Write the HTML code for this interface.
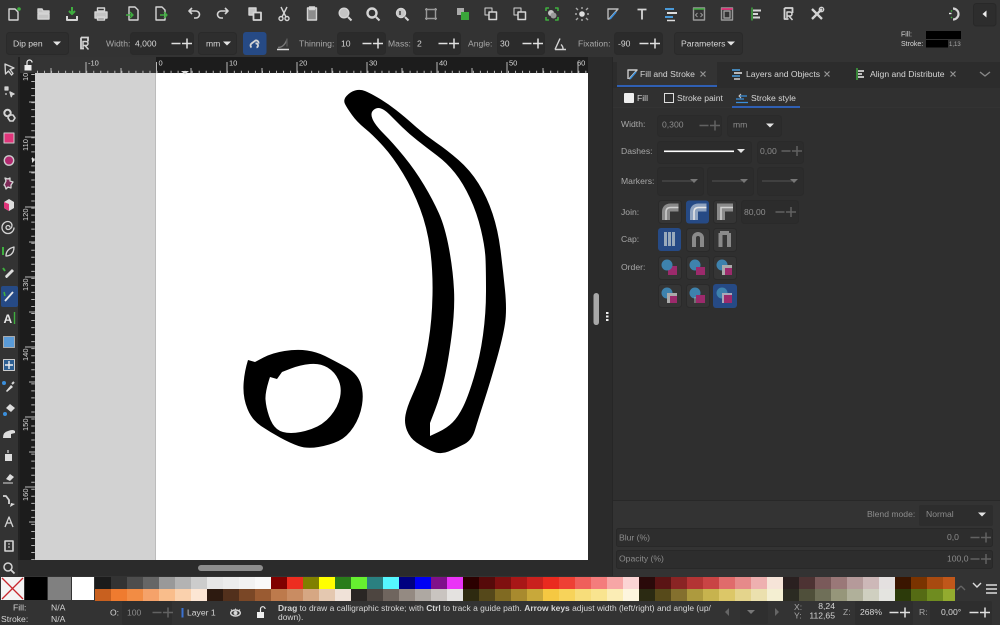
<!DOCTYPE html>
<html><head><meta charset="utf-8"><style>
html,body{margin:0;padding:0;background:#333;width:1000px;height:625px;overflow:hidden}
svg{display:block;position:absolute;left:0;top:0}
text{font-family:"Liberation Sans",sans-serif;font-size:8.6px;fill:#d6d6d6;stroke:none}
.d{fill:#8c8c8c}.m{fill:#a8a8a8}
.pal{position:absolute;display:flex;height:12px}
.pal i{display:block;width:16px;height:11.5px}
.s{fill:none;stroke:#d4d4d4;stroke-width:1.4}
</style></head><body>
<svg width="1000" height="625" viewBox="0 0 1000 625">
<defs>
<path id="mp" d="M-4.500 0h9M6 0h10M11-5v10" stroke="#e0e0e0" stroke-width="1.500" fill="none"/>
<path id="mpd" d="M-4.500 0h9M6 0h10M11-5v10" stroke="#626262" stroke-width="1.500" fill="none"/>
<path id="ar" d="M-4-2h8l-4 4z" fill="#e4e4e4"/>
<path id="ard" d="M-4-2h8l-4 4z" fill="#777"/>
</defs>
<rect width="1000" height="625" fill="#333"/>

<!-- canvas -->
<rect x="18" y="57" width="594" height="519" fill="#2b2b2b"/>
<rect x="35" y="73" width="121" height="487" fill="#d2d2d2"/>
<rect x="155" y="73" width="1" height="487" fill="#bcbcbc"/>
<rect x="156" y="73" width="432" height="487" fill="#fff"/>
<g fill="#000" fill-rule="evenodd">
<path d="M345,104Q343,100 346.500,96Q350,92 355,90.500Q360,89 365,91Q370,93 378.500,98Q387,103 396,110Q405,117 415,126Q425,135 436,142.500Q447,150 458.500,160Q470,170 478.500,183.500Q487,197 492.500,213.500Q498,230 500.500,250Q503,270 505,290Q507,310 505,323.500Q503,337 496.500,360Q490,383 484,401.500Q478,420 475,430Q472,440 464.500,444Q457,448 448.500,451.500Q440,455 431.500,451Q423,447 416.500,442.500Q410,438 407,430.500Q404,423 405.500,415Q407,407 412,396Q417,385 421,374Q425,363 428.500,341.500Q432,320 432.500,295Q433,270 430,248.500Q427,227 420,208.500Q413,190 403,173.500Q393,157 383,146Q373,135 365,128.500Q357,122 352,115Q347,108 345,104Z
M372.500,119Q370,113 373.500,110Q377,107 381,108.500Q385,110 389,114Q393,118 400.500,125.500Q408,133 417.500,140.500Q427,148 437,155.500Q447,163 455,173Q463,183 470,198Q477,213 481,230Q485,247 485.500,258.500Q486,270 486,291.500Q486,313 483,335Q480,357 474,377Q468,397 463,407Q458,417 452.500,422.500Q447,428 438.500,432L430,436L430,423L435,410Q440,397 444,380Q448,363 451.500,336.500Q455,310 454,290Q453,270 449,248.500Q445,227 439,213.500Q433,200 424,185Q415,170 404,156.500Q393,143 384,134Q375,125 372.500,119Z"/>
<path d="M248,360L255,362L263.500,357.500Q272,353 284.500,351Q297,349 307,350.500Q317,352 325,356Q333,360 345,366.500Q357,373 360.500,383Q364,393 362,405Q360,417 353.500,427Q347,437 338.500,441Q330,445 318.500,447Q307,449 298.500,446Q290,443 280,437.500Q270,432 261,426Q252,420 247.500,409Q243,398 243.500,385.500Q244,373 248,360Z
M270,377L277,379L282,372L291,368.500Q300,365 310,364Q320,363 327.500,367.500Q335,372 338.500,380Q342,388 340,397.500Q338,407 330.500,416Q323,425 311.500,429Q300,433 291,433Q282,433 277,429Q272,425 269,416Q266,407 265.500,399.500Q265,392 270,377Z"/>
</g>

<!-- rulers -->
<rect x="35" y="57" width="121" height="16" fill="#343434"/>
<rect x="156" y="57" width="432" height="16" fill="#1c1c1c"/>
<rect x="20" y="73" width="15" height="487" fill="#1c1c1c"/>
<rect x="20" y="57" width="15" height="16" fill="#333"/>
<g stroke="#b8b8b8" fill="none" stroke-width="1">
<path d="M35 72H588" stroke-dasharray="1 6.030" stroke-width="2.400" stroke-dashoffset="-2"/>
<path d="M33 73V560" stroke-dasharray="1 6.030" stroke-width="3.500" stroke-dashoffset="-1"/>
<path d="M86 62v11M156.500 62v11M227 62v11M297 62v11M367 62v11M437 62v11M507 62v11M578 62v11M51 68v5M121 68v5M191 68v5M262 68v5M332 68v5M402 68v5M472 68v5M543 68v5"/>
<path d="M25 137h10M25 207h10M25 277h10M25 347h10M25 417h10M25 487h10M29 102h6M29 172h6M29 242h6M29 312h6M29 382h6M29 452h6M29 522h6"/>
</g>
<path d="M181 71h8l-4 3.500z" fill="#ddd"/>
<path d="M32 157v6l3-3z" fill="#ddd"/>
<g>
<text x="88" y="65.500" style="font-size:7.500px">-10</text><text x="158.500" y="65.500" style="font-size:7.500px">0</text><text x="229" y="65.500" style="font-size:7.500px">10</text><text x="299" y="65.500" style="font-size:7.500px">20</text><text x="369" y="65.500" style="font-size:7.500px">30</text><text x="439" y="65.500" style="font-size:7.500px">40</text><text x="509" y="65.500" style="font-size:7.500px">50</text><text x="577" y="65.500" style="font-size:7.500px">60</text>
<text transform="translate(28 81) rotate(-90)" style="font-size:7.500px">10</text>
<text transform="translate(28 151) rotate(-90)" style="font-size:7.500px">110</text>
<text transform="translate(28 221) rotate(-90)" style="font-size:7.500px">120</text>
<text transform="translate(28 291) rotate(-90)" style="font-size:7.500px">130</text>
<text transform="translate(28 361) rotate(-90)" style="font-size:7.500px">140</text>
<text transform="translate(28 431) rotate(-90)" style="font-size:7.500px">150</text>
<text transform="translate(28 501) rotate(-90)" style="font-size:7.500px">160</text>
</g>
<!-- ruler lock -->
<g transform="translate(28 66)"><rect x="-3.500" y="-1" width="7" height="5.500" fill="#eee"/><path d="M-1-1v-2.500a2.500 2.500 0 0 1 5 0" fill="none" stroke="#eee" stroke-width="1.200"/></g>
<!-- scrollbars -->
<rect x="198" y="565" width="65" height="6" rx="3" fill="#8d8d8d"/>
<rect x="593.500" y="293" width="5.500" height="32" rx="2.700" fill="#a8a8a8"/>
<g fill="#eee"><rect x="606" y="312" width="2.500" height="2"/><rect x="606" y="315.500" width="2.500" height="2"/><rect x="606" y="319" width="2.500" height="2"/></g>
<rect x="612" y="57" width="1" height="519" fill="#262626"/>

<!-- top toolbar icons -->
<g class="s" stroke-linejoin="round">
<g transform="translate(14 14)"><path d="M-5-5h6l3 3v8h-9z"/><circle cx="5" cy="-5" r="1.800" fill="#3fae3f" stroke="none"/></g>
<g transform="translate(44 14)"><path d="M-6-5h4l1 2h6v2h-11zM-6 0h11v5h-11z" fill="#c4c4c4"/></g>
<g transform="translate(72 14)"><path d="M-5 2v4h10v-4" stroke-width="2"/><path d="M0-7v7M-3-3l3 3 3-3" stroke="#3fae3f" stroke-width="2"/></g>
<g transform="translate(101 14)"><rect x="-6" y="-2" width="12" height="6" fill="#c4c4c4"/><rect x="-3.500" y="-6" width="7" height="3"/><rect x="-3.500" y="3" width="7" height="3"/></g>
<g transform="translate(133 14)"><path d="M-4-7h6l3 3v10h-9z"/><path d="M-7 1h7M-3-2l3 3-3 3" stroke="#3fae3f"/></g>
<g transform="translate(161 14)"><path d="M-5-7h6l3 3v10h-9z"/><path d="M-1 1h7M3-2l3 3-3 3" stroke="#3fae3f"/></g>
<g transform="translate(194 14)"><path d="M-4-3h6a3 3 0 0 1 0 7h-2M-2-6l-3 3 3 3" stroke-width="1.600"/></g>
<g transform="translate(223 14)"><path d="M4-3h-6a3 3 0 0 0 0 7h2M2-6l3 3-3 3" stroke-width="1.600"/></g>
<g transform="translate(255 14)"><rect x="-6" y="-6" width="7" height="7" fill="#c4c4c4"/><rect x="-1.500" y="-1.500" width="7.500" height="7.500" fill="#333" stroke-width="1.800"/></g>
<g transform="translate(284 14)"><circle cx="-3" cy="4.500" r="2"/><circle cx="3" cy="4.500" r="2"/><path d="M-2 3l5-10M2 3l-5-10"/></g>
<g transform="translate(312 14)"><rect x="-4.500" y="-6" width="9" height="12" fill="#8d8d8d"/><rect x="-2.500" y="-7" width="5" height="2.500" fill="#ddd"/></g>
<g transform="translate(345 14)"><circle r="4.800" cx="-1" cy="-1" fill="#c4c4c4"/><path d="M3 3l3.500 3.500" stroke-width="2"/></g>
<g transform="translate(373 14)"><circle r="4.500" cx="-1" cy="-1" stroke-width="2.400"/><path d="M3 3l3.500 3.500" stroke-width="2"/></g>
<g transform="translate(402 14)"><circle r="4.500" cx="-1" cy="-1" fill="#c4c4c4"/><path d="M-2-3v4" stroke="#333"/><path d="M3 3l3.500 3.500" stroke-width="2"/></g>
<g transform="translate(431 14)" stroke="#999"><rect x="-4.500" y="-4.500" width="9" height="9"/><path d="M-6-4.500h1.500M-4.500-6v1.500M6-4.500h-1.500M4.500-6v1.500M-6 4.500h1.500M-4.500 6v-1.500M6 4.500h-1.500M4.500 6v-1.500"/></g>
<g transform="translate(463 14)" stroke="none"><rect x="-6" y="-6" width="7" height="7" fill="#aaa" stroke="none"/><rect x="-2" y="-2" width="8" height="8" fill="#3aa53a" stroke="none"/></g>
<g transform="translate(491 14)"><rect x="-6" y="-6" width="7" height="7" stroke-width="1"/><rect x="-2" y="-2" width="7.500" height="7.500" fill="#333" stroke-width="1.500"/></g>
<g transform="translate(520 14)"><rect x="-6" y="-6" width="7" height="7" stroke-width="1"/><rect x="-2" y="-2" width="7.500" height="7.500" fill="#333" stroke-width="1.500"/></g>
<g transform="translate(552 14)"><path d="M-6-3v-3h3M6-3v-3h-3M-6 3v3h3M6 3v3h-3" stroke="#3fae3f" stroke-width="1.600"/><circle cx="-1" cy="-1" r="3" fill="#c4c4c4" stroke="none"/><circle cx="1.500" cy="1.500" r="3" fill="#999" stroke="none"/></g>
<g transform="translate(582 14)" stroke="#aaa"><circle r="2.800" fill="#ddd" stroke="none"/><path d="M-6-6l2 2M6-6l-2 2M-6 6l2-2M6 6l-2-2M-7 0h2M7 0h-2M0-7v2M0 7v-2"/></g>
<g transform="translate(613 14)"><path d="M-5 5v-10h10l-9 10z" stroke="#bbb"/><path d="M-3 5l6-7" stroke="#3b8fdc" stroke-width="1.600"/></g>
<g transform="translate(642 14)"><path d="M-4.500-4.500h9M0-4.500v10" stroke-width="1.800"/></g>
<g transform="translate(671 14)"><path d="M-6-5h9" stroke="#4a9ad8" stroke-width="2"/><path d="M-4-1h10" stroke="#ddd" stroke-width="2"/><path d="M-6 3h8" stroke="#4a9ad8" stroke-width="2"/><path d="M-4 6.500h8" stroke="#ddd" stroke-width="1.500"/></g>
<g transform="translate(699 14)" stroke="#999"><rect x="-5.500" y="-6" width="11" height="12"/><path d="M-5.500-5h11" stroke="#3fae3f" stroke-width="1.500"/><path d="M-1.500-1l-2 2 2 2M1.500-1l2 2-2 2" stroke-width="1"/></g>
<g transform="translate(727 14)" stroke="#999"><rect x="-5.500" y="-6" width="11" height="12"/><path d="M-5.500-5h11" stroke="#e0357a" stroke-width="1.800"/><rect x="-3" y="-3" width="6" height="7"/></g>
<g transform="translate(757 14)"><path d="M-5-6.500v13" stroke="#3fae3f"/><path d="M-4-3.500h8M-4 0h5M-4 3.500h7" stroke-width="2"/></g>
<g transform="translate(789 14)"><path d="M-4.500-6h8v5M-4.500-6v11h4" stroke-width="1.800"/><path d="M-2 4v-6h3a2 2 0 0 1 0 4h-3M0 2l3.500 4" stroke-width="1.500"/></g>
<g transform="translate(817 14)"><path d="M-5-5l10 10M5-5l-10 10" stroke-width="2.300"/><circle cx="4.500" cy="-4.500" r="2.200" stroke-width="1.300"/></g>
<g transform="translate(955 14)"><path d="M-2-5.500a5.500 5.500 0 1 1 0 11" stroke-width="2.200"/><path d="M-4-3.500l1 1M-4 4l1-1" stroke="#3fae3f" stroke-width="1.400"/><path d="M-6-.500h2.500" stroke="#eee"/></g>
</g>
<rect x="973.500" y="3.500" width="22.500" height="22.500" rx="3" fill="#2d2d2d" stroke="#282828"/>
<path d="M986.500 10.500v7l-4-3.500z" fill="#eee"/>

<!-- second toolbar -->
<g fill="#2e2e2e" stroke="#2a2a2a">
<rect x="6.500" y="32.500" width="62" height="22" rx="3"/>
<rect x="130.500" y="32.500" width="63" height="22" rx="3" fill="#2b2b2b"/>
<rect x="198.500" y="32.500" width="38" height="22" rx="3"/>
<rect x="337.500" y="32.500" width="48" height="22" rx="3" fill="#2b2b2b"/>
<rect x="413.500" y="32.500" width="47" height="22" rx="3" fill="#2b2b2b"/>
<rect x="497.500" y="32.500" width="47" height="22" rx="3" fill="#2b2b2b"/>
<rect x="614.500" y="32.500" width="48" height="22" rx="3" fill="#2b2b2b"/>
<rect x="674.500" y="32.500" width="68" height="22" rx="3"/>
</g>
<rect x="243" y="32" width="23.500" height="23" rx="3" fill="#264a85"/>
<text x="13" y="46.500">Dip pen</text><use href="#ar" x="57" y="43.500"/>
<text x="106" y="46.500" class="m">Width:</text><text x="135" y="46.500">4,000</text><use href="#mp" x="176" y="43.500"/>
<text x="206" y="46.500">mm</text><use href="#ar" x="227" y="43.500"/>
<text x="299" y="46.500" class="m">Thinning:</text><text x="341" y="46.500">10</text><use href="#mp" x="367" y="43.500"/>
<text x="388" y="46.500" class="m">Mass:</text><text x="417" y="46.500">2</text><use href="#mp" x="443" y="43.500"/>
<text x="468" y="46.500" class="m">Angle:</text><text x="500" y="46.500">30</text><use href="#mp" x="527" y="43.500"/>
<text x="578" y="46.500" class="m">Fixation:</text><text x="618" y="46.500">-90</text><use href="#mp" x="644" y="43.500"/>
<text x="681" y="46.500">Parameters</text><use href="#ar" x="731" y="43.500"/>
<g class="s">
<g transform="translate(85 43.500)"><path d="M-4-6h7v4M-4-6v11h3" stroke-width="1.800"/><path d="M-2 4v-6h3a2 2 0 0 1 0 4h-3M0 2l3.500 4" stroke-width="1.500"/></g>
<g transform="translate(254.500 43.500)"><path d="M-3 4a2.500 2.500 0 0 1 0-4l4-3a2.500 2.500 0 0 1 3 3" stroke-width="1.800"/><path d="M1 0a2 2 0 0 1 1 4" stroke-width="1.800"/></g>
<g transform="translate(283 43.500)"><path d="M-6 6h12" stroke="#ddd" stroke-width="1.500"/><path d="M-5 4q6 0 9-8" stroke="#777"/><path d="M4-5v8" stroke="#555"/></g>
<g transform="translate(560 43.500)"><path d="M-5 6l5-11M-5 6h11M1 1a6 6 0 0 1 2 5"/></g>
</g>
<!-- fill stroke indicator -->
<text x="901" y="36.500" style="font-size:7px">Fill:</text><text x="901" y="46" style="font-size:7px">Stroke:</text>
<rect x="926" y="31" width="35" height="8" fill="#000"/><rect x="926" y="40" width="22" height="7.500" fill="#000"/>
<text x="949" y="46" style="font-size:6px" class="m">1,13</text>

<!-- left toolbar -->
<rect x="18" y="57" width="2" height="503" fill="#222"/>
<rect x="1" y="286" width="17" height="21" rx="2" fill="#264a85"/>
<g class="s" stroke-linejoin="round">
<g transform="translate(9 69)"><path d="M-4-5l9 4-4 1.500 3 4-1.500 1.500-3-4-3 3z" stroke-width="1.300"/></g>
<g transform="translate(9 91)"><path d="M-4-4h3v3h-3zM-3 2v2" stroke-width="1.200" fill="#ccc"/><path d="M1 1l4 2-2 .7-.7 2z" fill="#ddd"/></g>
<g transform="translate(9 115)"><circle cx="-1.500" cy="-2" r="3.200" stroke-width="2"/><path d="M0 0h4l2 3-2 3h-3l-2-3z" stroke-width="1.600"/></g>
<g transform="translate(9 138)"><rect x="-5" y="-5" width="10" height="10" fill="#e0357a" stroke="#ccc" stroke-width="1"/></g>
<g transform="translate(9 160.500)"><circle r="4.700" fill="#b32a70" stroke="#ccc" stroke-width="1.400"/></g>
<g transform="translate(9 183)"><path d="M-5 2l2-4-1-3 3 1 2-1 0 3 3 1-2 3 0 3-3-1-2 2-1-3z" fill="#7e2a58" stroke-width="1.300"/></g>
<g transform="translate(9 205)"><path d="M0-6l5 3v6l-5 3-5-3v-6z" fill="#ddd" stroke="none"/><path d="M0-1l-5-2v6l5 3z" fill="#e0357a" stroke="none"/></g>
<g transform="translate(9 227.500)"><path d="M1 0a2 2 0 1 0-2 2a4 4 0 1 0 0-8a6 6 0 1 0 6 6" stroke-width="1.300"/></g>
<g transform="translate(9 251)"><path d="M-6-4v8" stroke="#3fae3f" stroke-width="2"/><path d="M-3 5q0-7 8-9q0 8-7 9z" stroke-width="1.300"/></g>
<g transform="translate(9 273)"><path d="M-6-5l2 3" stroke="#3fae3f" stroke-width="2"/><path d="M-3 5l-1-2 7-7 2 2-7 7z" fill="#ddd" stroke="none"/></g>
<g transform="translate(9 296)"><path d="M-5-4l1 4" stroke="#3fae3f" stroke-width="1.600"/><path d="M-4 5l8-9" stroke-width="1.800" stroke="#e8e8e8"/></g>
<g transform="translate(9 318)"><text x="-5.500" y="5" style="font-size:12px;font-weight:bold;fill:#e8e8e8">A</text><path d="M5.500-6v12" stroke="#3fae3f" stroke-width="1.400"/></g>
<g transform="translate(9 342)"><rect x="-5.500" y="-5.500" width="11" height="11" fill="#5a9bd8" stroke="#aaa" stroke-width="1"/></g>
<g transform="translate(9 365)"><rect x="-5.500" y="-5.500" width="11" height="11" fill="#2d5f92" stroke="#ccc" stroke-width="1"/><path d="M-4 0h4v-4M4 0h-4v4" stroke="#eee"/></g>
<g transform="translate(9 387)"><path d="M-3 4l5-6 2 2-6 5z" fill="#ddd" stroke="none"/><path d="M3-3l2-2" stroke-width="2"/><circle cx="-5" cy="-4" r="2" fill="#3b8fdc" stroke="none"/></g>
<g transform="translate(9 409)"><path d="M1-5l5 4-4 4-5-4z" fill="#ddd" stroke="none"/><circle cx="-4" cy="5" r="2" fill="#3b8fdc" stroke="none"/></g>
<g transform="translate(9 433)"><path d="M-6 5q0-6 5-7 5-2 7 0v2l-4 1v4z" fill="#ddd" stroke="none"/></g>
<g transform="translate(9 456)"><rect x="-4" y="-2" width="7" height="7" fill="#ddd" stroke="none"/><path d="M-1-6v3" stroke="#999" stroke-width="2"/></g>
<g transform="translate(9 478)"><path d="M-3 1l4-5 4 3-4 4z" fill="#ddd" stroke="none"/><path d="M-6 5h10" stroke="#aaa" stroke-width="1.400"/></g>
<g transform="translate(9 500)"><path d="M-6-4l3 0 3 4v4" stroke-width="1.800"/><path d="M2 3l-1 4 5-3z" fill="#ddd" stroke="none"/></g>
<g transform="translate(9 522)"><path d="M-4 5l4-10 4 10M-2 1h4" stroke-width="1.300"/></g>
<g transform="translate(9 546)"><rect x="-4" y="-5" width="8" height="10" stroke-width="1.600"/><path d="M-1-2h2M-1 1h2" stroke-width="1"/></g>
<g transform="translate(9 568)"><circle cx="-1" cy="-1" r="4" stroke-width="1.500"/><path d="M2 2l3.500 3.500" stroke-width="1.800"/></g>
</g>

<!-- panel -->
<rect x="613" y="62" width="387" height="45" fill="#303030"/>
<rect x="613" y="62" width="387" height="26" fill="#2c2c2c"/>
<rect x="617" y="62" width="100" height="24" fill="#333"/>
<rect x="617" y="85" width="100" height="2" fill="#2f5fb3"/>
<rect x="732" y="106" width="68" height="2" fill="#2f5fb3"/>
<rect x="613" y="108" width="387" height="392" fill="#2f2f2f"/>
<rect x="613" y="500" width="387" height="1" fill="#282828"/>
<text x="640" y="77">Fill and Stroke</text>
<text x="746" y="77">Layers and Objects</text>
<text x="870" y="77">Align and Distribute</text>
<g class="s" stroke-linejoin="round">
<path d="M700.500 71.500l5 5M705.500 71.500l-5 5M824.500 71.500l5 5M829.500 71.500l-5 5M950.500 71.500l5 5M955.500 71.500l-5 5" stroke="#999" stroke-width="1.200"/>
<path d="M980 72l5 4 5-4" stroke="#888"/>
<g transform="translate(632 74)"><path d="M-4 5v-9h9l-8 9" stroke="#ccc"/><path d="M-2 5l6-7" stroke="#3b8fdc" stroke-width="1.400"/></g>
<g transform="translate(737 74)"><path d="M-5-4h8" stroke="#4a9ad8" stroke-width="1.600"/><path d="M-3-1h8" stroke="#ddd" stroke-width="1.600"/><path d="M-5 2h8" stroke="#4a9ad8" stroke-width="1.600"/><path d="M-3 5h6" stroke="#ddd" stroke-width="1.400"/></g>
<g transform="translate(861 74)"><path d="M-4-6v12" stroke="#3fae3f"/><path d="M-3-3h6M-3 0h4M-3 3h6" stroke-width="1.800"/></g>
<g transform="translate(742 98)"><path d="M-6 1h8M-2-2h7M-6 4.500h12" stroke="#3b8fdc" stroke-width="1.300"/><path d="M-1-4l-2 2 2 2" stroke="#ccc" stroke-width="1"/></g>
</g>
<rect x="624" y="93" width="10" height="10" rx="1" fill="#eee"/>
<rect x="664.500" y="93.500" width="9" height="9" fill="none" stroke="#ddd"/>
<text x="637" y="101">Fill</text><text x="677" y="101">Stroke paint</text><text x="751" y="101">Stroke style</text>

<!-- stroke style form -->
<g fill="#2c2c2c" stroke="#2a2a2a">
<rect x="657.500" y="115.500" width="64" height="21" rx="3"/>
<rect x="727.500" y="115.500" width="54" height="21" rx="3"/>
<rect x="657.500" y="141.500" width="94" height="22" rx="3"/>
<rect x="757.500" y="141.500" width="46" height="22" rx="3"/>
<rect x="657.500" y="167.500" width="46" height="28" rx="3"/>
<rect x="707.500" y="167.500" width="46" height="28" rx="3"/>
<rect x="757.500" y="167.500" width="46" height="28" rx="3"/>
<rect x="741.500" y="200.500" width="57" height="23" rx="3"/>
</g>
<text x="621" y="127" class="m">Width:</text><text x="662" y="127.500" class="d">0,300</text><use href="#mpd" x="704" y="125.500"/>
<text x="733" y="127.500" class="d">mm</text><use href="#ar" x="770" y="125.500"/>
<text x="621" y="154" class="m">Dashes:</text>
<rect x="664" y="150.500" width="70" height="1.600" fill="#fff"/><use href="#ar" x="741" y="151"/>
<text x="760" y="154" class="d">0,00</text><use href="#mpd" x="786" y="151"/>
<text x="621" y="184" class="m">Markers:</text>
<path d="M662 181h30M712 181h30M762 181h30" stroke="#555"/>
<use href="#ard" x="694" y="181"/><use href="#ard" x="744" y="181"/><use href="#ard" x="794" y="181"/>
<text x="621" y="215" class="m">Join:</text><text x="744" y="215" class="d">80,00</text><use href="#mpd" x="780" y="212"/>
<text x="621" y="242" class="m">Cap:</text><text x="621" y="270" class="m">Order:</text>
<g fill="#353535" stroke="#2a2a2a">
<rect x="658.500" y="200.500" width="23" height="23" rx="3"/>
<rect x="686" y="200.500" width="23" height="23" rx="3" fill="#264a85" stroke="none"/>
<rect x="713.500" y="200.500" width="23" height="23" rx="3"/>
<rect x="658" y="228" width="23" height="23" rx="3" fill="#264a85" stroke="none"/>
<rect x="686.500" y="228.500" width="23" height="23" rx="3"/>
<rect x="713.500" y="228.500" width="23" height="23" rx="3"/>
<rect x="658.500" y="256.500" width="23" height="23" rx="3"/>
<rect x="686.500" y="256.500" width="23" height="23" rx="3"/>
<rect x="713.500" y="256.500" width="23" height="23" rx="3"/>
<rect x="658.500" y="284.500" width="23" height="23" rx="3"/>
<rect x="686.500" y="284.500" width="23" height="23" rx="3"/>
<rect x="713" y="284" width="24" height="24" rx="3" fill="#264a85" stroke="none"/>
</g>
<!-- join / cap icons -->
<g fill="none">
<path d="M666 220v-8q0-4.500 4.500-4.500h8" stroke="#8a8a8a" stroke-width="8"/><path d="M666 220v-8q0-4.500 4.500-4.500h8" stroke="#cfcfcf" stroke-width="1.500"/>
<path d="M694 220v-8q0-4.500 4.500-4.500h8" stroke="#8fa3c0" stroke-width="8"/><path d="M694 220v-8q0-4.500 4.500-4.500h8" stroke="#e8e8e8" stroke-width="1.500"/>
<path d="M721 220v-12.500h12" stroke="#8a8a8a" stroke-width="8"/><path d="M721 220v-12.500h12" stroke="#cfcfcf" stroke-width="1.500"/>
<path d="M665.500 246v-14M669.500 246v-14M673.500 246v-14" stroke="#9ab" stroke-width="3"/>
<path d="M694 247v-9a4 4 0 0 1 8 0v9" stroke="#8a8a8a" stroke-width="4"/>
<path d="M720.500 247v-14M729 247v-14M720 233h9" stroke="#8a8a8a" stroke-width="4"/>
</g>
<g>
<g transform="translate(670 268)"><rect x="-2" y="-2" width="9" height="9" fill="#9c2a6c"/><circle cx="-3" cy="-3" r="5.500" fill="#3e82ad"/></g>
<g transform="translate(698 268)"><circle cx="-3" cy="-3" r="5.500" fill="#3e82ad"/><rect x="-2" y="-1" width="9" height="8" fill="#9c2a6c"/></g>
<g transform="translate(725 268)"><circle cx="-3" cy="-3" r="5.500" fill="#3e82ad"/><rect x="-3" y="-3" width="10" height="10" fill="#aaa"/><rect x="0" y="0" width="7" height="7" fill="#9c2a6c"/></g>
<g transform="translate(670 296)"><circle cx="-3" cy="-3" r="5.500" fill="#3e82ad"/><rect x="-3" y="-3" width="10" height="10" fill="#aaa"/><rect x="0" y="0" width="7" height="7" fill="#9c2a6c"/></g>
<g transform="translate(698 296)"><circle cx="-3" cy="-3" r="5.500" fill="#3e82ad"/><rect x="-2" y="-1" width="9" height="8" fill="#9c2a6c"/><path d="M-3 7v-6" stroke="#aaa"/></g>
<g transform="translate(725 296)"><circle cx="-3" cy="-3" r="5.500" fill="#3e82ad"/><rect x="-3" y="-3" width="10" height="10" fill="#a9a9b8"/><rect x="-1" y="-1" width="8" height="8" fill="#9c2a6c"/></g>
</g>

<!-- blend / blur / opacity -->
<rect x="919" y="505" width="74" height="21" rx="2" fill="#2d2d2d"/>
<text x="867" y="517" class="d">Blend mode:</text><text x="926" y="517" class="d">Normal</text><use href="#ar" x="982" y="514.500"/>
<rect x="616.500" y="528.500" width="376" height="18" rx="2" fill="#2d2d2d" stroke="#282828"/>
<rect x="616.500" y="550.500" width="376" height="18" rx="2" fill="#2d2d2d" stroke="#282828"/>
<text x="619" y="540.500" class="d">Blur (%)</text><text x="947" y="540" class="d">0,0</text><use href="#mpd" x="975" y="537.500"/>
<text x="619" y="561.500" class="d">Opacity (%)</text><text x="947" y="561.500" class="d">100,0</text><use href="#mpd" x="975" y="559"/>

<!-- palette -->
<rect x="0" y="576" width="1000" height="25" fill="#333"/>
<rect x="1" y="577" width="23" height="23" fill="#f4f4f4"/>
<path d="M2 578l21 21M23 578l-21 21" stroke="#c8282e" stroke-width="1.300"/>
<rect x="25" y="577" width="22" height="23" fill="#000"/>
<rect x="48" y="577" width="23" height="23" fill="#808080"/>
<rect x="72" y="577" width="22" height="23" fill="#fff"/>
<path d="M961 586l-4 4M961 586l4 4" stroke="#666" stroke-width="1.300"/>
<path d="M973 583l4 4 4-4" stroke="#ddd" stroke-width="1.400" fill="none"/>
<path d="M986 585h11M986 589h11M986 593h11" stroke="#ddd" stroke-width="1.400"/>

<!-- status bar -->
<text x="13" y="610.500">Fill:</text><text x="1" y="622">Stroke:</text>
<text x="51" y="610.500">N/A</text><text x="51" y="622">N/A</text>
<text x="110" y="615.500">O:</text>
<rect x="122" y="601" width="50" height="24" rx="2" fill="#2e2e2e"/>
<text x="127" y="615.500" class="d">100</text><use href="#mpd" x="157" y="612.500"/>
<rect x="181.500" y="608" width="2" height="9.500" fill="#3b72d0"/>
<text x="187" y="615.500">Layer 1</text>
<g class="s"><ellipse cx="235.500" cy="613" rx="4.800" ry="3"/><circle cx="235.500" cy="613" r="1.300" fill="#ddd"/><path d="M231 609.500l1.500 1.500M240 609.500l-1.500 1.500M235.500 608.500v1.500" stroke-width="1"/></g>
<rect x="257" y="612" width="7" height="6" fill="#eee"/><path d="M260.500 612v-3a2.300 2.300 0 0 1 4.600 0" fill="none" stroke="#eee" stroke-width="1.200"/>
<text x="278" y="611" style="font-size:8.450px"><tspan style="font-weight:bold">Drag</tspan> to draw a calligraphic stroke; with <tspan style="font-weight:bold">Ctrl</tspan> to track a guide path. <tspan style="font-weight:bold">Arrow keys</tspan> adjust width (left/right) and angle (up/</text>
<text x="278" y="620" style="font-size:8.450px">down).</text>
<path d="M729 608v8l-4-4z" fill="#666"/>
<rect x="740" y="601" width="28" height="23" rx="2" fill="#2f2f2f"/>
<use href="#ard" x="751" y="612"/>
<path d="M775 608v8l4-4z" fill="#666"/>
<text x="794" y="610" class="m">X:</text><text x="794" y="618.500" class="m">Y:</text>
<text x="835" y="609" text-anchor="end">8,24</text><text x="835" y="618.500" text-anchor="end">112,65</text>
<text x="843" y="615" class="m">Z:</text>
<rect x="855" y="601" width="58" height="24" rx="2" fill="#2e2e2e"/>
<text x="860" y="615">268%</text><use href="#mp" x="894" y="612.500"/>
<text x="919" y="615" class="m">R:</text>
<rect x="930" y="601" width="62" height="24" rx="2" fill="#2e2e2e"/>
<text x="941" y="615">0,00°</text><use href="#mp" x="974" y="612.500"/>
</svg>
<div class="pal" style="left:95px;top:577px">
<i style="background:#1b1b1b"></i><i style="background:#333"></i><i style="background:#4d4d4d"></i><i style="background:#666"></i><i style="background:#999"></i><i style="background:#b3b3b3"></i><i style="background:#ccc"></i><i style="background:#e6e6e6"></i><i style="background:#ececec"></i><i style="background:#f2f2f2"></i><i style="background:#f9f9f9"></i><i style="background:#800000"></i><i style="background:#ed2d20"></i><i style="background:#808000"></i><i style="background:#ff0"></i><i style="background:#2a7d1a"></i><i style="background:#66f030"></i><i style="background:#2a8080"></i><i style="background:#55f7ff"></i><i style="background:#000080"></i><i style="background:#0000f5"></i><i style="background:#80108a"></i><i style="background:#ea33f7"></i><i style="background:#2b0000"></i><i style="background:#560a0a"></i><i style="background:#7f1010"></i><i style="background:#a81717"></i><i style="background:#c9211e"></i><i style="background:#ea2a1f"></i><i style="background:#ee4034"></i><i style="background:#ef5f5b"></i><i style="background:#f47c7c"></i><i style="background:#f7a6a6"></i><i style="background:#fbd4d4"></i><i style="background:#2a0a0a"></i><i style="background:#5a1414"></i><i style="background:#8a2424"></i><i style="background:#b33434"></i><i style="background:#c94444"></i><i style="background:#e06b6b"></i><i style="background:#e68a8a"></i><i style="background:#eeb0b0"></i><i style="background:#f6e4d8"></i><i style="background:#2a2020"></i><i style="background:#4d3333"></i><i style="background:#7a5a5a"></i><i style="background:#9a7878"></i><i style="background:#b59a9a"></i><i style="background:#cdb8b8"></i><i style="background:#e4e0e0"></i><i style="background:#3a1500"></i><i style="background:#7a3300"></i><i style="background:#a84a10"></i><i style="background:#c0571a;width:12px"></i>
</div>
<div class="pal" style="left:95px;top:589px">
<i style="background:#c8601f"></i><i style="background:#ef7b2f"></i><i style="background:#f28c44"></i><i style="background:#f5a26a"></i><i style="background:#f9bd8b"></i><i style="background:#fad1ad"></i><i style="background:#fce6d4"></i><i style="background:#2d1a10"></i><i style="background:#52301c"></i><i style="background:#7a4726"></i><i style="background:#9a5b32"></i><i style="background:#bd7a4c"></i><i style="background:#c98c62"></i><i style="background:#d6a783"></i><i style="background:#e4c8b0"></i><i style="background:#f0e2d8"></i><i style="background:#2a2624"></i><i style="background:#4d4540"></i><i style="background:#6f655e"></i><i style="background:#948a82"></i><i style="background:#aea8a2"></i><i style="background:#c9c4c0"></i><i style="background:#e4e2e0"></i><i style="background:#2e2a10"></i><i style="background:#55481a"></i><i style="background:#806a22"></i><i style="background:#a88a2e"></i><i style="background:#c8a83a"></i><i style="background:#f5c842"></i><i style="background:#f7d35a"></i><i style="background:#f7dd7a"></i><i style="background:#f9e48f"></i><i style="background:#fbedb5"></i><i style="background:#fdf5de"></i><i style="background:#2b2a12"></i><i style="background:#574a1a"></i><i style="background:#84702e"></i><i style="background:#ad9a3e"></i><i style="background:#c7b34e"></i><i style="background:#dcc768"></i><i style="background:#e4d48c"></i><i style="background:#ebe0ae"></i><i style="background:#f4efd2"></i><i style="background:#2b2b22"></i><i style="background:#4f4f3a"></i><i style="background:#6f6f58"></i><i style="background:#96967a"></i><i style="background:#b0b09a"></i><i style="background:#cfcfc0"></i><i style="background:#e4e4e0"></i><i style="background:#2c3a0a"></i><i style="background:#556b14"></i><i style="background:#6f8c20"></i><i style="background:#93ab2f;width:12px"></i>
</div>
</body></html>
